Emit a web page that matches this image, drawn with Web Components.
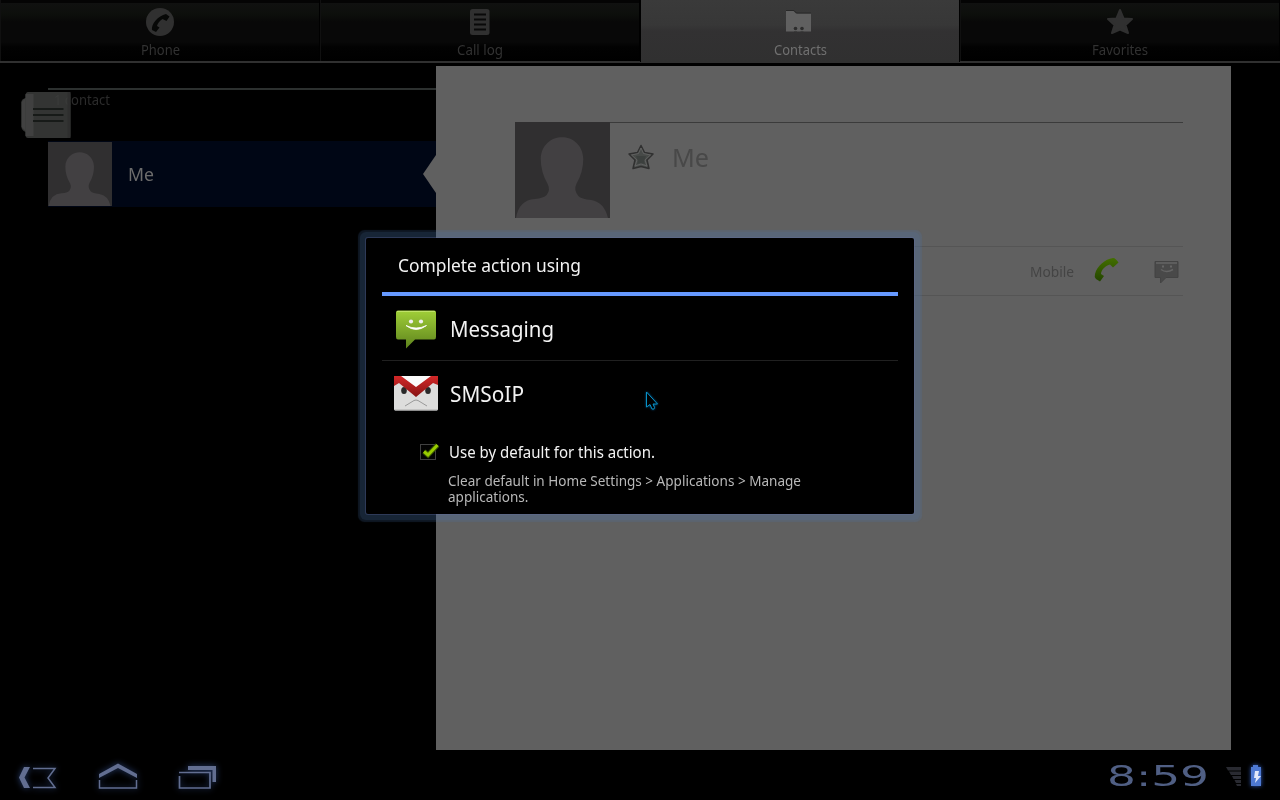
<!DOCTYPE html>
<html lang="en"><head><meta charset="utf-8"><title>Contacts</title>
<style>
html,body{margin:0;background:#000;width:1280px;height:800px;overflow:hidden}
body{font-family:"Noto Sans","Open Sans",sans-serif}
</style></head><body>
<contacts-screen></contacts-screen>
<script>
function define(name, html, init){
  const t=document.createElement('template'); t.innerHTML=html;
  customElements.define(name,class extends HTMLElement{
    constructor(){super();this.attachShadow({mode:'open'}).append(t.content.cloneNode(true));}
    connectedCallback(){if(init)init(this,this.shadowRoot);}
  });
}

/* Text fitted to an exact width: w. */
define('fit-text',`<style>:host{display:inline-block;white-space:nowrap;flex:none}span{display:inline-block;transform-origin:0 50%}</style><span><slot></slot></span>`,
(h,r)=>{const s=r.querySelector('span'),w=+h.getAttribute('w');h.style.width=w+'px';s.style.transform='scaleX('+(w/s.getBoundingClientRect().width)+')';});

define('nav-tab',`<style>
:host{display:flex;flex-direction:column;align-items:center;height:61px;box-sizing:border-box;padding-top:7px;color:#323232;font-size:14px;line-height:20px;
 background:linear-gradient(#040404 0 3px,#101110 3px,#0d0f0c 14px,#080808 22px,#080808 42px,#020202 47px,#000 61px);border-left:1px solid #101010;border-right:1px solid #000}
:host([selected]){color:#707070;background:linear-gradient(#3a3a3a,#373737 25px,#323132 31px,#303030);border-left:1px solid #000;border-right:1px solid #000;height:62px}
::slotted(svg){width:32px;height:30px;display:block;margin-bottom:3px}
</style><slot name="icon"></slot><slot></slot>`);

define('tab-bar',`<style>:host{display:grid;grid-template-columns:320px 320px 320px 320px;height:61px;border-bottom:2px solid #303030}
svg{overflow:visible}</style>
<nav-tab><svg slot="icon" viewBox="0 0 32 30"><circle cx="16" cy="15" r="14" fill="#303030"/><path d="M8 23C7 17 14 9 22 7L25.500 9.500 22.500 14 18.500 12Q14 15 13 19L15.500 20.500 12 25Z" fill="#070807"/></svg><fit-text w="39">Phone</fit-text></nav-tab>
<nav-tab><svg slot="icon" viewBox="0 0 32 30"><rect x="6" y="2" width="19.500" height="26" rx="2.500" fill="#303030"/><path d="M10 7.500h12M10 12.500h12M10 17.500h12M10 22.500h12" stroke="#090909" stroke-width="2"/></svg><fit-text w="46">Call log</fit-text></nav-tab>
<nav-tab selected><svg slot="icon" viewBox="0 0 32 30"><path d="M2 4h7.500l2.500 2.500h15V24.500H2z" fill="#606060"/><path d="M2 3.500h8l2.500 2.500h14.500" stroke="#282828" fill="none"/><circle cx="11.500" cy="21.500" r="1.800" fill="#2c2c2c"/><circle cx="18" cy="21.500" r="1.800" fill="#2c2c2c"/><path d="M10 24.500h3M16.500 24.500h3" stroke="#3c3c3c"/></svg><fit-text w="53">Contacts</fit-text></nav-tab>
<nav-tab><svg slot="icon" viewBox="0 0 32 30"><path d="M16 3L19.500 11.500 28 12 21.500 18 24 26 16 22.500 8 26 10.500 18 4 12 12.500 11.500Z" fill="#303030" stroke="#303030" stroke-width="2" stroke-linejoin="round"/></svg><fit-text w="56">Favorites</fit-text></nav-tab>`);

define('person-photo',`<style>:host{display:block;background:#302f30}svg{display:block;width:100%;height:100%}</style>
<svg viewBox="0 0 96 96" preserveAspectRatio="none"><path d="M1 96Q4 78 20 77Q29 76 32 73Q36 68 33 62Q26 50 26 37C27 8 68 8 69 37Q69 50 62 62Q59 68 64 74Q67 77 77 78Q90 80 94 96Z" fill="#424042"/></svg>`);

define('contact-list',`<style>
:host{display:block;width:436px;box-sizing:border-box;padding:25px 0 0 48px}
.rule{height:2px;background:#2c302f}
.count{height:51px;position:relative;padding-left:6px;font-size:14px;line-height:20px;color:#2b2b2b;box-sizing:border-box}
.book{position:absolute;left:-28px;top:0;width:52px;height:50px}
.row{display:flex;align-items:center;height:66px;background:#000615;position:relative;color:#6c6c6c;font-size:18px}
person-photo{width:64px;height:64px;margin-right:16px}
.arrow{position:absolute;right:0;top:14px;width:13px;height:38px;background:#606060;clip-path:polygon(100% 0,0 50%,100% 100%)}
</style><div class="rule"></div><div class="count"><fit-text w="56">1 contact</fit-text>
<svg class="book" viewBox="0 0 52 50"><path d="M1.500 11Q2 9 5.500 8V5Q6 2 8 2H49Q50.500 2 50.500 4V46Q50.500 48 49 48H8Q5.500 48 5.500 45V42Q1.500 40 1.500 37Z" fill="#3c3d3c" fill-opacity=".85"/><path d="M1.500 12L5.500 8V41L1.500 37Z" fill="#414141"/><path d="M5.500 4h8v42h-8z" fill="#404040"/><path d="M47.500 2h3v46h-3z" fill="#2e2e2e"/><path d="M13 19h30.500M13 25h30.500M13 31h30.500" stroke="#171a18" stroke-width="2"/></svg></div>
<div class="row"><person-photo></person-photo><fit-text w="26">Me</fit-text><div class="arrow"></div></div>`);

define('contact-card',`<style>
:host{display:block;width:795px;height:684px;background:#606060;box-sizing:border-box;padding:56px 48px 0 79px}
.head{display:flex;height:96px}
person-photo{width:95px;height:96px}
.name{flex:1;display:flex;align-items:flex-start;border-top:1px solid #3b3b3b;padding-left:17px;font-size:26px;line-height:32px;color:#484848}
.star{width:28px;height:28px;margin:20px 17px 0 0}
.name fit-text{margin-top:18px}
.entry{margin-top:28px;height:48px;display:flex;align-items:center;justify-content:flex-end;border-top:1px solid #555;border-bottom:1px solid #555;color:#444;font-size:14px;padding-right:2px}
.call{width:28px;height:28px;margin:0 32px 2px 19px}.sms{width:28px;height:28px}
</style><div class="head"><person-photo></person-photo><div class="name">
<svg class="star" viewBox="0 0 28 28"><path d="M14 2.500L17.500 9.500 26 11 20 17 22 25.500 14 23.500 6 25.500 8 17 2 11 10.500 9.500Z" fill="#4b4e4c" stroke="#303030" stroke-width="1.500" stroke-linejoin="round"/><path d="M14 5L16.500 10.500 23.500 12 18 17 20 23 14 21 8 23 10 17 4.500 12 11.500 10.500Z" fill="#474a48" stroke="#666" stroke-width=".8"/><path d="M9 13h10l-2 5 1 3-4-1-4 1 1-3z" fill="#3c403e"/></svg>
<fit-text w="37">Me</fit-text></div></div>
<div class="entry"><fit-text w="44">Mobile</fit-text>
<svg class="call" viewBox="0 0 28 28"><defs><linearGradient id="g" x2="0" y2="1"><stop stop-color="#436f00"/><stop offset="1" stop-color="#234400"/></linearGradient></defs><path d="M2 18C4 10 12 3 20 2Q22 1.500 25.500 6.500L20 11.500 17 8.500C13 9 8 14 8 18L11 20 7 25.500 3 23Q1 21 2 18Z" fill="url(#g)"/></svg>
<svg class="sms" viewBox="0 0 28 28"><path d="M2 4.500h23v16H13L7.500 26v-5.500H2z" fill="#494949" stroke="#434343"/><path d="M3 6h21M8 12.500q5.500 4 12 0" stroke="#646464" stroke-width="1.500" fill="none"/><path d="M9 9.500h2m6 0h2" stroke="#666" stroke-width="2"/></svg></div>`);

define('chooser-row',`<style>:host{display:flex;align-items:center;height:64px;box-sizing:border-box;padding-left:12px;font-size:22px;color:#f3f3f3}
::slotted(svg){width:44px;height:44px;margin-right:12px;display:block}</style><slot name="icon"></slot><slot></slot>`);

define('action-dialog',`<style>
:host{display:block;position:absolute;left:366px;top:238px;width:548px;height:276px;box-sizing:border-box;padding:0 16px;background:#000;border-radius:2px;color:#f3f3f3;
 box-shadow:0 0 0 1px rgba(100,110,170,.3),0 0 0 6px rgba(76,122,168,.14),0 0 1px 7.500px rgba(76,122,178,.2)}
.title{height:54px;line-height:54px;padding-left:16px;font-size:18px}
.bar{height:4px;background:#6699ff}.line{height:1px;background:#202020}
.default{display:flex;align-items:center;font-size:16px;line-height:22px;padding-left:36px;margin-top:15px}
.default svg{width:25px;height:24px;margin-right:6px}
.hint{padding-left:66px;margin-top:9px;font-size:14px;line-height:16px;color:#b8b8b8}
.hint fit-text{display:block}
</style><div class="title"><fit-text w="183">Complete action using</fit-text></div><div class="bar"></div>
<chooser-row><svg slot="icon" viewBox="0 0 44 44"><defs><linearGradient id="m" x2="0" y2="1"><stop stop-color="#a0cf38"/><stop offset="1" stop-color="#5e831d"/></linearGradient></defs><g transform="translate(0 1)"><path d="M4 3.500H40Q42 3.500 42 5.500V30Q42 32.500 40 32.500H21L12 41.500V32.500H4Q2 32.500 2 30V5.500Q2 3.500 4 3.500Z" fill="url(#m)"/><path d="M3 4.500h38" stroke="#c0e269"/><circle cx="17" cy="14.500" r="2.100" fill="#eee"/><circle cx="27" cy="14.500" r="2.100" fill="#eee"/><path d="M12 18.500Q22 26.500 32.500 18.500Q22 23.500 12 18.500" fill="#fff" stroke="#fff" stroke-width=".8"/></g></svg><fit-text w="104">Messaging</fit-text></chooser-row>
<div class="line"></div>
<chooser-row><svg slot="icon" viewBox="0 0 44 44"><defs><linearGradient id="r" x2="0" y2="1"><stop stop-color="#d32828"/><stop offset="1" stop-color="#861313"/></linearGradient></defs><rect y="5" width="44" height="34.500" rx="1.500" fill="#dddddc"/><path d="M7 5h30L22 17z" fill="#fafafa"/><ellipse cx="10" cy="19.500" rx="2.800" ry="3.600" fill="#292929"/><ellipse cx="34" cy="19.500" rx="2.800" ry="3.600" fill="#292929"/><path d="M0 5H7L22 16 37 5H44V14L39 12 22 26 5 12 0 15Z" fill="url(#r)"/><path d="M11 35L20 29.500Q22 28.500 24 29.500L33 35" fill="none" stroke="#888" stroke-width=".8"/><path d="M1 39h42" stroke="#aaa"/></svg><fit-text w="74">SMSoIP</fit-text></chooser-row>
<div class="default"><svg viewBox="0 0 25 24"><rect x="2.500" y="4.500" width="15" height="15" fill="#030303" stroke="#414141"/><path d="M6 11.500L10 15 19.500 5" fill="none" stroke="#385500" stroke-width="5"/><path d="M6 11.500L10 15 19.500 5" fill="none" stroke="#99cc00" stroke-width="3"/></svg><fit-text w="206">Use by default for this action.</fit-text></div>
<div class="hint"><fit-text w="353">Clear default in Home Settings &gt; Applications &gt; Manage<br>applications.</fit-text></div>`);

define('mouse-pointer',`<style>:host{position:absolute;left:643px;top:389px;width:18px;height:24px;display:block;filter:drop-shadow(0 0 1px #005c99)}</style>
<svg width="18" height="24"><path d="M3.500 3V18L7 15.500 9 20Q11.500 21 11.500 18.500L10 15H14.500Z" fill="#000" stroke="#0791c4"/></svg>`);

define('system-bar',`<style>
:host{display:flex;height:50px;align-items:flex-start;box-sizing:border-box;padding:9px 17px 0 14px}
.nav{width:46px;height:34px;filter:drop-shadow(0 0 3px #293f70)}
.nav+.nav{margin-left:34px}
.clock{margin:0 17px 0 auto;color:#505f84;font:28px/36px "DejaVu Sans",sans-serif}
.sig{width:17px;height:34px;margin-right:4px}.bat{width:16px;height:34px;filter:drop-shadow(0 0 2px #305bbb)}
</style>
<svg class="nav" viewBox="0 0 46 34"><path d="M10 8H16L10.500 18.500 16 29H10L5 18.500Z" fill="#626e91"/><path d="M19 9.500H41L34 19 41 28.500H19" fill="none" stroke="#626e91" stroke-width="1.500"/></svg>
<svg class="nav" viewBox="0 0 46 34"><path d="M5 15L24 4.500 43 15V19L24 9 5 19Z" fill="#626e91"/><path d="M5.500 21V29H42.500V21" fill="none" stroke="#626e91" stroke-width="1.500"/></svg>
<svg class="nav" viewBox="0 0 46 34"><path d="M14 7H42V23H38.500V11H14Z" fill="#626e91"/><path d="M5 13.500H36V29H5.500V17" fill="none" stroke="#626e91" stroke-width="1.700"/></svg>
<fit-text class="clock" w="102">8:59</fit-text>
<svg class="sig" viewBox="0 0 17 34"><path d="M0 8H15V11.500H2zM3 12.500H15V16H5zM6 17H15V20H7.500zM8.500 21H15V24H10zM10 25H15V27H11z" fill="#292a31"/></svg>
<svg class="bat" viewBox="0 0 16 34"><path d="M6 6h5v2h3v19H4V8h2z" fill="#4e79d2"/><path d="M8 12h4l-1 5h3l-6 7 1-5H7z" fill="#e2e8f9"/></svg>`);

define('contacts-screen',`<style>:host{display:flex;flex-direction:column;width:1280px;height:800px;background:#000;position:relative}
.main{display:flex;height:687px}contact-card{margin-top:3px}</style>
<tab-bar></tab-bar><div class="main"><contact-list></contact-list><contact-card></contact-card></div><system-bar></system-bar><action-dialog></action-dialog><mouse-pointer></mouse-pointer>`);
</script></body></html>
